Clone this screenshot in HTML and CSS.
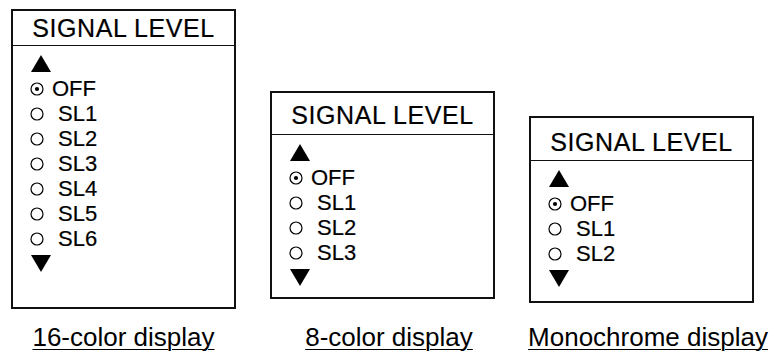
FILE: index.html
```html
<!DOCTYPE html>
<html>
<head>
<meta charset="utf-8">
<link rel="stylesheet" href="styles.css">
</head>
<body>
<div class="sheet">
  <div class="panel panel-16">
    <div class="panel-head">SIGNAL LEVEL</div>
    <ul class="panel-body">
      <li class="row"><span class="arrow arrow-up"></span></li>
      <li class="row"><svg class="radio" viewBox="0 0 14 14"><circle cx="7" cy="7" r="6" fill="none" stroke="#000" stroke-width="1.2"/><circle cx="7" cy="7" r="2.1" fill="#000"/></svg><span class="label">OFF</span></li>
      <li class="row"><svg class="radio" viewBox="0 0 14 14"><circle cx="7" cy="7" r="6" fill="none" stroke="#000" stroke-width="1.2"/></svg><span class="label label-sl">SL1</span></li>
      <li class="row"><svg class="radio" viewBox="0 0 14 14"><circle cx="7" cy="7" r="6" fill="none" stroke="#000" stroke-width="1.2"/></svg><span class="label label-sl">SL2</span></li>
      <li class="row"><svg class="radio" viewBox="0 0 14 14"><circle cx="7" cy="7" r="6" fill="none" stroke="#000" stroke-width="1.2"/></svg><span class="label label-sl">SL3</span></li>
      <li class="row"><svg class="radio" viewBox="0 0 14 14"><circle cx="7" cy="7" r="6" fill="none" stroke="#000" stroke-width="1.2"/></svg><span class="label label-sl">SL4</span></li>
      <li class="row"><svg class="radio" viewBox="0 0 14 14"><circle cx="7" cy="7" r="6" fill="none" stroke="#000" stroke-width="1.2"/></svg><span class="label label-sl">SL5</span></li>
      <li class="row"><svg class="radio" viewBox="0 0 14 14"><circle cx="7" cy="7" r="6" fill="none" stroke="#000" stroke-width="1.2"/></svg><span class="label label-sl">SL6</span></li>
      <li class="row"><span class="arrow arrow-down"></span></li>
    </ul>
  </div>
  <div class="panel panel-8">
    <div class="panel-head">SIGNAL LEVEL</div>
    <ul class="panel-body">
      <li class="row"><span class="arrow arrow-up"></span></li>
      <li class="row"><svg class="radio" viewBox="0 0 14 14"><circle cx="7" cy="7" r="6" fill="none" stroke="#000" stroke-width="1.2"/><circle cx="7" cy="7" r="2.1" fill="#000"/></svg><span class="label">OFF</span></li>
      <li class="row"><svg class="radio" viewBox="0 0 14 14"><circle cx="7" cy="7" r="6" fill="none" stroke="#000" stroke-width="1.2"/></svg><span class="label label-sl">SL1</span></li>
      <li class="row"><svg class="radio" viewBox="0 0 14 14"><circle cx="7" cy="7" r="6" fill="none" stroke="#000" stroke-width="1.2"/></svg><span class="label label-sl">SL2</span></li>
      <li class="row"><svg class="radio" viewBox="0 0 14 14"><circle cx="7" cy="7" r="6" fill="none" stroke="#000" stroke-width="1.2"/></svg><span class="label label-sl">SL3</span></li>
      <li class="row"><span class="arrow arrow-down"></span></li>
    </ul>
  </div>
  <div class="panel panel-mono">
    <div class="panel-head">SIGNAL LEVEL</div>
    <ul class="panel-body">
      <li class="row"><span class="arrow arrow-up"></span></li>
      <li class="row"><svg class="radio" viewBox="0 0 14 14"><circle cx="7" cy="7" r="6" fill="none" stroke="#000" stroke-width="1.2"/><circle cx="7" cy="7" r="2.1" fill="#000"/></svg><span class="label">OFF</span></li>
      <li class="row"><svg class="radio" viewBox="0 0 14 14"><circle cx="7" cy="7" r="6" fill="none" stroke="#000" stroke-width="1.2"/></svg><span class="label label-sl">SL1</span></li>
      <li class="row"><svg class="radio" viewBox="0 0 14 14"><circle cx="7" cy="7" r="6" fill="none" stroke="#000" stroke-width="1.2"/></svg><span class="label label-sl">SL2</span></li>
      <li class="row"><span class="arrow arrow-down"></span></li>
    </ul>
  </div>
  <div class="caption caption-16"><span>16-color display</span></div>
  <div class="caption caption-8"><span>8-color display</span></div>
  <div class="caption caption-mono"><span>Monochrome display</span></div>
</div>
</body>
</html>
```
FILE: styles.css
```css
html, body {
  margin: 0;
  padding: 0;
  background: #fff;
}
body {
  font-family: "Liberation Sans", Arial, sans-serif;
  color: #000;
}
.sheet {
  display: grid;
  grid-template-columns: repeat(3, 225px);
  column-gap: 34px;
  padding-left: 11px;
  align-items: start;
}
.panel {
  box-sizing: border-box;
  width: 225px;
  border: 2px solid #111;
}
.panel-16 { margin-top: 9px; height: 300px; }
.panel-8 { margin-top: 91px; height: 208px; }
.panel-mono { margin-top: 116px; height: 187px; }
.panel-head {
  border-bottom: 1px solid #111;
  text-align: center;
  font-size: 25px;
  letter-spacing: 0.6px;
  -webkit-text-stroke: 0.2px #000;
  box-sizing: border-box;
  display: flex;
  align-items: center;
  justify-content: center;
}
.panel-16 .panel-head { height: 35px; }
.panel-8 .panel-head { height: 42px; padding-top: 4px; }
.panel-mono .panel-head { height: 43px; padding-top: 6px; }
.panel-body {
  list-style: none;
  margin: 0;
  padding: 5px 0 0 17px;
}
.row {
  height: 25px;
  display: flex;
  align-items: center;
  font-size: 22px;
  -webkit-text-stroke: 0.2px #000;
}
.radio {
  width: 14px;
  height: 14px;
  flex: none;
}
.label { margin-left: 8px; }
.label-sl { margin-left: 14px; }
.arrow {
  width: 0;
  height: 0;
  border-left: 10px solid transparent;
  border-right: 10px solid transparent;
  margin-left: 1px;
}
.arrow-up { border-bottom: 17px solid #000; }
.arrow-down { border-top: 17px solid #000; }
.caption {
  margin-top: 13px;
  display: flex;
  justify-content: center;
  font-size: 26px;
  line-height: 30px;
  white-space: nowrap;
}
.caption span {
  text-decoration: underline;
  text-decoration-thickness: 1px;
  text-underline-offset: 3px;
}
.caption-8, .caption-mono { padding-left: 13px; }
```
